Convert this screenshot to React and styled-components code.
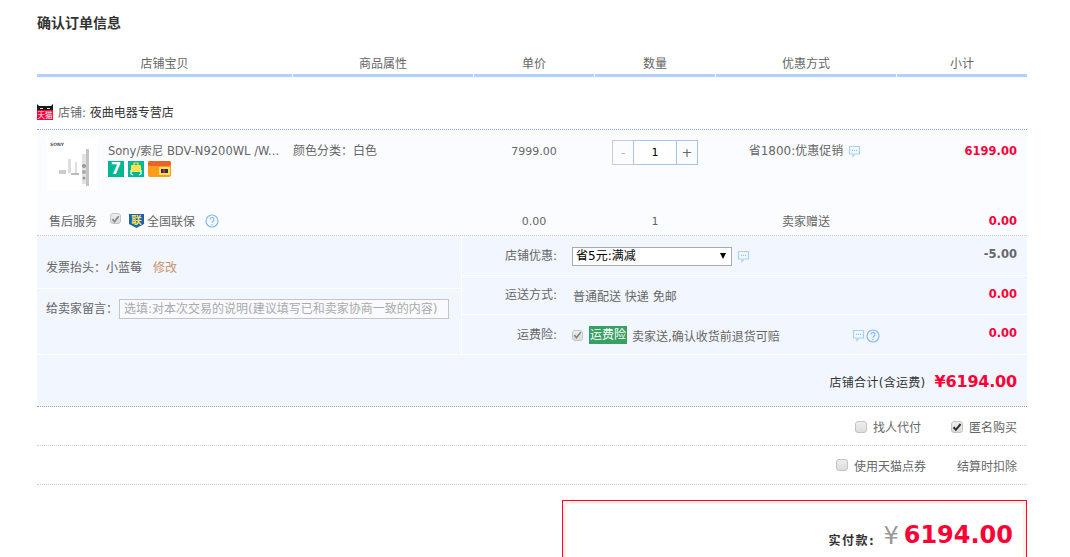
import React from "react";
import styled, { createGlobalStyle } from "styled-components";

const FONT = `"DejaVu Sans", "Noto Sans CJK SC", sans-serif`;

const GlobalStyle = createGlobalStyle`
  html, body {
    margin: 0;
    padding: 0;
    height: 557px;
    overflow: hidden;
    background: #fff;
  }
  body {
    font-family: ${FONT};
    font-size: 12px;
    color: #666;
  }
  * { box-sizing: border-box; }
`;

const COLUMNS = "255px 180px 120px 120px 180px 130px";

const Page = styled.div`
  width: 990px;
  margin-left: 37px;
  padding-top: 14px;
`;

const Title = styled.h2`
  margin: 0;
  height: 18px;
  line-height: 18px;
  font-size: 14px;
  font-weight: 700;
  color: #333;
`;

const HeaderRow = styled.div`
  display: grid;
  grid-template-columns: ${COLUMNS};
  column-gap: 1px;
  margin-top: 21px;
`;

const HeaderCell = styled.div`
  height: 24px;
  line-height: 22px;
  text-align: center;
  font-size: 12px;
  color: #666;
  border-bottom: 3px solid #b2d1ff;
`;

const StoreRow = styled.div`
  display: flex;
  align-items: center;
  gap: 5px;
  height: 53px;
  padding-top: 17px;
  border-bottom: 1px dotted #80a8e0;
  color: #333;
`;

const StoreLabel = styled.span`
  color: #666;
`;

const ItemRow = styled.div`
  display: grid;
  grid-template-columns: ${COLUMNS};
  column-gap: 1px;
  height: 74px;
  background: #fbfcff;
`;

const ProductCell = styled.div`
  display: flex;
  gap: 11px;
  padding: 10px 0 0 10px;
`;

const Thumb = styled.div`
  width: 50px;
  height: 50px;
  background: #fff;
  flex: none;
`;

const ProductInfo = styled.div`
  display: flex;
  flex-direction: column;
  gap: 3px;
`;

const ProductName = styled.div`
  width: 172px;
  height: 18px;
  line-height: 22px;
  font-size: 11.5px;
  color: #666;
  white-space: nowrap;
`;

const Badges = styled.div`
  display: flex;
  gap: 4px;
`;

const SevenBadge = styled.span`
  width: 16px;
  height: 16px;
  line-height: 16px;
  text-align: center;
  background: #00b894;
  color: #fff;
  font-size: 15px;
  font-weight: 700;
`;

const TextCell = styled.div`
  padding-top: 12px;
  line-height: 18px;
  text-align: ${(p) => p.$align || "left"};
  color: #666;
`;

const Number = styled.span`
  font-size: 11px;
`;

const Stepper = styled.div`
  display: flex;
  justify-content: center;
  padding-top: 10px;
`;

const StepButton = styled.div`
  width: ${(p) => p.$w}px;
  height: 25px;
  line-height: 23px;
  text-align: center;
  border: 1px solid ${(p) => (p.$off ? "#ccc" : "#a7c6e5")};
  border-right-width: ${(p) => (p.$off ? 0 : 1)}px;
  color: ${(p) => (p.$off ? "#bbb" : "#666")};
  font-size: 13px;
`;

const StepValue = styled.div`
  width: 43px;
  height: 25px;
  line-height: 24px;
  text-align: center;
  border: 1px solid #a7c6e5;
  border-right-width: 0;
  background: #fff;
  color: #000;
  font-size: 11px;
`;

const Discount = styled.div`
  display: flex;
  justify-content: center;
  align-items: center;
  gap: 5px;
  height: 18px;
  margin-top: 12px;
  padding-right: 2px;
  line-height: 18px;
`;

const Price = styled.div`
  padding: ${(p) => p.$top ?? 12}px 10px 0 0;
  margin-top: ${(p) => p.$shift || 0}px;
  line-height: 18px;
  text-align: right;
  font-size: 11.5px;
  font-weight: 700;
  color: ${(p) => p.$color || "#ff0036"};
`;

const ServiceRow = styled(ItemRow)`
  height: 32px;
  padding-top: 2px;
  align-items: center;
  border-bottom: 1px dotted #ccc;
`;

const ServiceCell = styled.div`
  display: flex;
  align-items: center;
  padding-left: 12px;
  color: #666;
`;

const ServiceLabel = styled.span`
  width: 61px;
`;

const ServiceText = styled.div`
  text-align: center;
  color: #666;
`;

const ServiceWarranty = styled.span`
  margin: 0 10px 0 3px;
`;

const Box = styled.span`
  display: inline-flex;
  align-items: center;
  justify-content: center;
  flex: none;
  width: ${(p) => p.$s || 12}px;
  height: ${(p) => p.$s || 12}px;
  border: 1px solid #c4c4c4;
  border-radius: 3px;
  background: linear-gradient(#eee, #dcdcdc);
`;

const ServiceBox = styled(Box)`
  margin: -4px 8px 0 0;
`;

const Panel = styled.div`
  display: grid;
  grid-template-columns: 424px 1fr;
  column-gap: 1px;
  background: #fff;
  border-bottom: 1px solid #fff;
`;

const PanelLeft = styled.div`
  display: flex;
  flex-direction: column;
  gap: 1px;
`;

const InvoiceRow = styled.div`
  display: flex;
  align-items: center;
  height: 52px;
  padding: 8px 0 0 9px;
  background: #f2f6ff;
  color: #666;
`;

const EditLink = styled.span`
  margin-left: 11px;
  color: #c9946b;
`;

const MessageRow = styled.div`
  display: flex;
  align-items: flex-start;
  flex: 1;
  padding: 10px 0 0 9px;
  background: #f2f6ff;
  line-height: 20px;
`;

const MessageBox = styled.div`
  width: 330px;
  height: 20px;
  margin-left: 1px;
  padding-left: 4px;
  line-height: 19px;
  border: 1px solid #c4c4c4;
  background: #f8faff;
  color: #aaa;
  white-space: nowrap;
`;

const PanelRight = styled.div`
  display: flex;
  flex-direction: column;
  gap: 1px;
`;

const OptionRow = styled.div`
  display: grid;
  grid-template-columns: 95px 1fr 110px;
  column-gap: 15px;
  height: ${(p) => p.$h}px;
  padding-top: ${(p) => p.$pad}px;
  background: #f2f6ff;
`;

const OptionLabel = styled.div`
  text-align: right;
  line-height: 20px;
`;

const OptionBody = styled.div`
  display: flex;
  align-items: center;
  height: 20px;
  gap: 5px;
`;

const ShippingText = styled.span`
  margin-left: 1px;
`;

const SelectWrap = styled.div`
  position: relative;
  width: 160px;
  height: 19px;
  line-height: 17px;
  padding-left: 3px;
  border: 1px solid #a9a9a9;
  background: #fff;
  color: #000;

  &::after {
    content: "";
    position: absolute;
    right: 5px;
    top: 5px;
    border-style: solid;
    border-width: 6px 3.5px 0;
    border-color: #000 transparent transparent;
  }
`;

const InsuranceTag = styled.span`
  height: 18px;
  line-height: 18px;
  padding: 0 1px;
  margin-left: 1px;
  background: #38a062;
  color: #fff;
`;

const InsuranceText = styled.span`
  width: 216px;
  white-space: nowrap;
`;

const IconPair = styled.span`
  display: inline-flex;
  margin: 2px 0 0 -1px;
  gap: 1px;
`;

const TotalRow = styled.div`
  display: flex;
  justify-content: flex-end;
  align-items: center;
  gap: 9px;
  height: 52px;
  padding: 1px 10px 0 0;
  background: #f2f6ff;
  border-bottom: 1px dotted #80a8e0;
  color: #333;
`;

const TotalLabel = styled.span`
  letter-spacing: 0.3px;
`;

const TotalPrice = styled.span`
  font-size: 16px;
  font-weight: 700;
  color: #ff0036;
  letter-spacing: -0.2px;
`;

const ExtraRow = styled.div`
  display: flex;
  justify-content: flex-end;
  align-items: center;
  gap: ${(p) => p.$gap}px;
  height: 39px;
  padding: ${(p) => p.$pad || 0}px 10px 0 0;
  border-bottom: 1px dotted #ccc;
`;

const ExtraItem = styled.span`
  display: flex;
  align-items: center;
  gap: 6px;
`;

const PayBox = styled.div`
  display: flex;
  justify-content: flex-end;
  align-items: flex-start;
  width: 465px;
  height: 90px;
  margin: 15px 0 0 auto;
  padding: 18px 13px 0 0;
  border: 1px solid #ff0036;
  outline: 3px solid #fff0e8;
  outline-offset: -4px;
`;

const PayLabel = styled.span`
  margin: 12px 8px 0 0;
  font-weight: 700;
  color: #333;
  letter-spacing: 1.5px;
`;

const PayYen = styled.span`
  margin: 3px 5px 0 0;
  font-size: 24px;
  line-height: 28px;
  color: #999;
`;

const PayAmount = styled.span`
  font-size: 24px;
  line-height: 32px;
  font-weight: 700;
  color: #ff0036;
`;

function Bubble() {
  return (
    <svg width="13" height="13" viewBox="0 0 13 13" fill="none">
      <path d="M1.5 1.5h10v7.5H7l-2 2.5V9H1.5z" stroke="#a8d2f2" strokeWidth="1.2" fill="#f2f8fe" />
      <path d="M4 5.3h1M6 5.3h1M8 5.3h1" stroke="#8fc0e8" strokeWidth="1.2" />
    </svg>
  );
}

function Help() {
  return (
    <svg width="14" height="14" viewBox="0 0 14 14" fill="none">
      <circle cx="7" cy="7" r="6" stroke="#7fbcef" strokeWidth="1.2" />
      <path d="M5 5.5a2 2 0 1 1 3 1.7c-.7.4-1 .8-1 1.6" stroke="#7fbcef" strokeWidth="1.2" />
      <path d="M7 10v1.2" stroke="#7fbcef" strokeWidth="1.2" />
    </svg>
  );
}

function Check({ color = "#888" }) {
  return (
    <svg width="10" height="10" viewBox="0 0 10 10" fill="none">
      <path d="M1.5 5.2l2.4 2.6L8.6 2" stroke={color} strokeWidth="2" />
    </svg>
  );
}

function TmallIcon() {
  return (
    <svg width="16" height="16" viewBox="0 0 16 16">
      <path d="M0 0l2 2h12l2-2v7H0z" fill="#1a1a1a" />
      <rect x="3" y="4" width="3" height="1" fill="#ddd" />
      <rect x="10" y="4" width="3" height="1" fill="#ddd" />
      <rect y="6" width="16" height="10" fill="#ff0036" />
      <text x="8" y="14" fontSize="7.5" fill="#fff" textAnchor="middle">天猫</text>
    </svg>
  );
}

function ProductThumb() {
  return (
    <svg width="50" height="50" viewBox="0 0 50 50">
      <text x="3" y="6" fontSize="4.5" fontWeight="700" fill="#555">SONY</text>
      <rect x="39" y="9" width="3" height="37" fill="#c4c4c4" />
      <rect x="35" y="14" width="4" height="30" fill="#e2e2e2" />
      <circle cx="37" cy="26" r="2" fill="#999" />
      <circle cx="37" cy="32" r="2" fill="#aaa" />
      <circle cx="37" cy="38" r="1.5" fill="#999" />
      <rect x="21" y="19" width="3" height="14" fill="#ddd" />
      <rect x="28" y="22" width="2" height="12" fill="#ddd" />
      <rect x="12" y="30" width="7" height="4" fill="#ccc" />
      <rect x="24" y="33" width="8" height="2" fill="#bbb" />
    </svg>
  );
}

function BagBadge() {
  return (
    <svg width="16" height="16" viewBox="0 0 16 16">
      <rect width="16" height="16" fill="#00b894" />
      <rect x="3" y="4" width="10" height="7" rx="1" fill="#ffe14d" />
      <path d="M6 4V2h4v2" fill="none" stroke="#ffe14d" strokeWidth="1.2" />
      <path d="M3 9v4l2 1M13 9v4l-2 1" fill="none" stroke="#fff" strokeWidth="1.2" />
    </svg>
  );
}

function CardBadge() {
  return (
    <svg width="23" height="16" viewBox="0 0 23 16">
      <rect width="23" height="16" rx="2" fill="#ff9c1a" />
      <rect width="23" height="5" rx="2" fill="#e8642a" />
      <rect x="11" y="6" width="11" height="8" fill="#ffe14d" />
      <rect x="13" y="8" width="7" height="4" fill="#1c2a80" />
      <rect x="15" y="8" width="2" height="4" fill="#d81e3a" />
    </svg>
  );
}

function WarrantyIcon() {
  return (
    <svg width="15" height="15" viewBox="0 0 15 15">
      <path d="M0 1h15v10l-7.5 4L0 11z" fill="#1a62b8" />
      <text x="7.5" y="11" fontSize="10.5" fontWeight="700" fill="#ffe14d" textAnchor="middle">联</text>
    </svg>
  );
}

export default function App() {
  const headers = ["店铺宝贝", "商品属性", "单价", "数量", "优惠方式", "小计"];

  return (
    <Page>
      <GlobalStyle />
      <Title>确认订单信息</Title>

      <HeaderRow>
        {headers.map((h) => (
          <HeaderCell key={h}>{h}</HeaderCell>
        ))}
      </HeaderRow>

      <StoreRow>
        <TmallIcon />
        <span>
          <StoreLabel>店铺:</StoreLabel> 夜曲电器专营店
        </span>
      </StoreRow>

      <ItemRow>
        <ProductCell>
          <Thumb>
            <ProductThumb />
          </Thumb>
          <ProductInfo>
            <ProductName>Sony/索尼 BDV-N9200WL /W...</ProductName>
            <Badges>
              <SevenBadge>7</SevenBadge>
              <BagBadge />
              <CardBadge />
            </Badges>
          </ProductInfo>
        </ProductCell>
        <TextCell>颜色分类：白色</TextCell>
        <TextCell $align="center">
          <Number>7999.00</Number>
        </TextCell>
        <Stepper>
          <StepButton $w={21} $off>-</StepButton>
          <StepValue>1</StepValue>
          <StepButton $w={22}>+</StepButton>
        </Stepper>
        <Discount>
          <span>省1800:优惠促销</span>
          <Bubble />
        </Discount>
        <Price>6199.00</Price>
      </ItemRow>

      <ServiceRow>
        <ServiceCell>
          <ServiceLabel>售后服务</ServiceLabel>
          <ServiceBox $s={11}>
            <Check />
          </ServiceBox>
          <WarrantyIcon />
          <ServiceWarranty>全国联保</ServiceWarranty>
          <Help />
        </ServiceCell>
        <span />
        <ServiceText>
          <Number>0.00</Number>
        </ServiceText>
        <ServiceText>
          <Number>1</Number>
        </ServiceText>
        <ServiceText>卖家赠送</ServiceText>
        <Price $top={0}>0.00</Price>
      </ServiceRow>

      <Panel>
        <PanelLeft>
          <InvoiceRow>
            发票抬头：小蓝莓
            <EditLink>修改</EditLink>
          </InvoiceRow>
          <MessageRow>
            给卖家留言：
            <MessageBox>选填:对本次交易的说明(建议填写已和卖家协商一致的内容)</MessageBox>
          </MessageRow>
        </PanelLeft>
        <PanelRight>
          <OptionRow $h={39} $pad={10}>
            <OptionLabel>店铺优惠:</OptionLabel>
            <OptionBody>
              <SelectWrap>省5元:满减</SelectWrap>
              <Bubble />
            </OptionBody>
            <Price $top={0} $shift={-1} $color="#666">-5.00</Price>
          </OptionRow>
          <OptionRow $h={38} $pad={9}>
            <OptionLabel>运送方式:</OptionLabel>
            <OptionBody>
              <ShippingText>普通配送 快递 免邮</ShippingText>
            </OptionBody>
            <Price $top={0}>0.00</Price>
          </OptionRow>
          <OptionRow $h={39} $pad={10}>
            <OptionLabel>运费险:</OptionLabel>
            <OptionBody>
              <Box $s={11}>
                <Check />
              </Box>
              <InsuranceTag>运费险</InsuranceTag>
              <InsuranceText>卖家送,确认收货前退货可赔</InsuranceText>
              <IconPair>
                <Bubble />
                <Help />
              </IconPair>
            </OptionBody>
            <Price $top={0} $shift={-1}>0.00</Price>
          </OptionRow>
        </PanelRight>
      </Panel>

      <TotalRow>
        <TotalLabel>店铺合计(含运费)</TotalLabel>
        <TotalPrice>¥6194.00</TotalPrice>
      </TotalRow>

      <ExtraRow $gap={30} $pad={1}>
        <ExtraItem>
          <Box />
          找人代付
        </ExtraItem>
        <ExtraItem>
          <Box>
            <Check color="#333" />
          </Box>
          匿名购买
        </ExtraItem>
      </ExtraRow>
      <ExtraRow $gap={31}>
        <ExtraItem>
          <Box />
          使用天猫点券
        </ExtraItem>
        <span>结算时扣除</span>
      </ExtraRow>

      <PayBox>
        <PayLabel>实付款:</PayLabel>
        <PayYen>¥</PayYen>
        <PayAmount>6194.00</PayAmount>
      </PayBox>
    </Page>
  );
}
